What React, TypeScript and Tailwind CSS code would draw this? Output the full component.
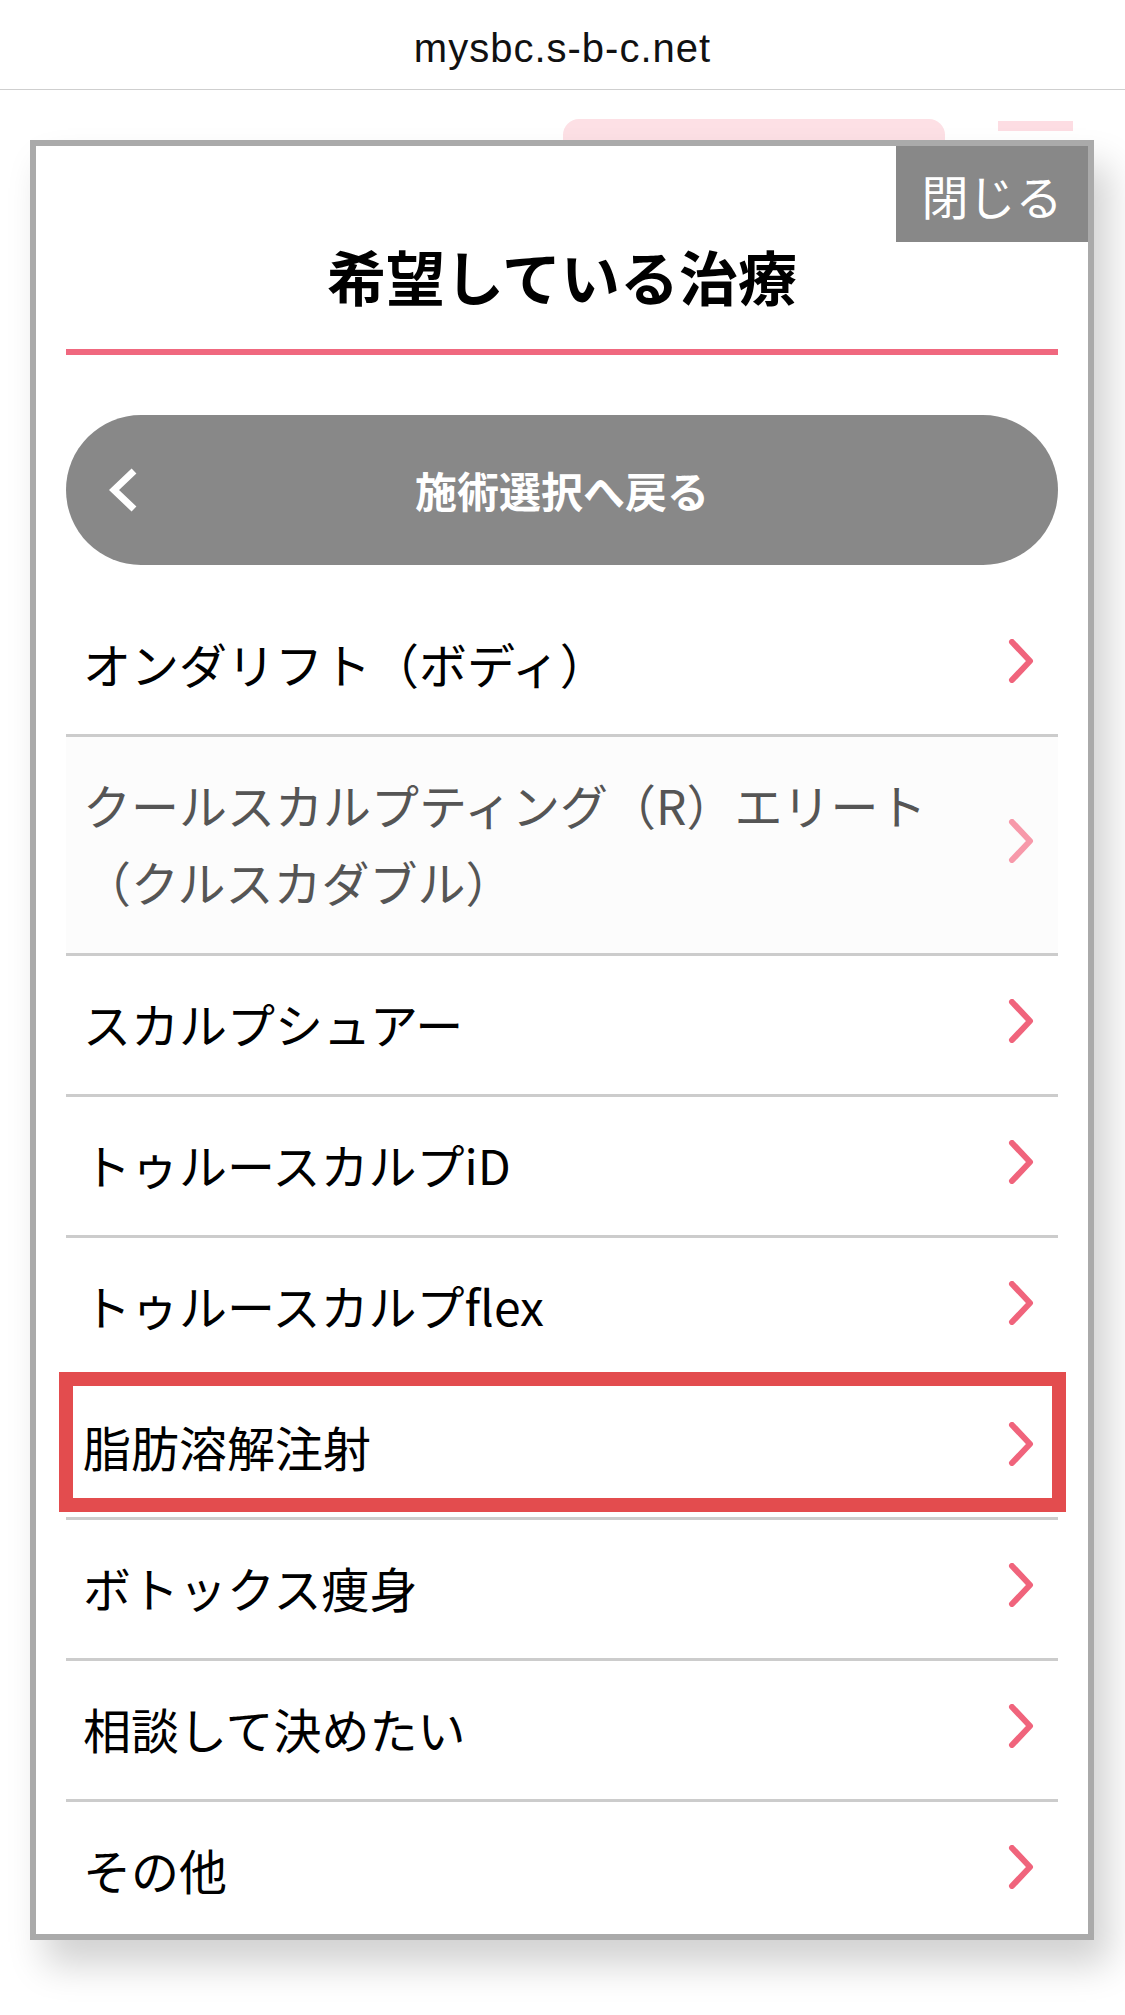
const items = [
  { label: "オンダリフト（ボディ）" },
  { label: "クールスカルプティング（R）エリート", label2: "（クルスカダブル）", muted: true },
  { label: "スカルプシュアー" },
  { label: "トゥルースカルプiD" },
  { label: "トゥルースカルプflex" },
  { label: "脂肪溶解注射", marked: true },
  { label: "ボトックス痩身" },
  { label: "相談して決めたい" },
  { label: "その他" },
];

function Chevron({ color }: { color: string }) {
  return (
    <svg width="26" height="44" viewBox="0 0 26 44" className="shrink-0">
      <polyline
        points="4,3 22,22 4,41"
        fill="none"
        stroke={color}
        strokeWidth="6"
        strokeLinecap="round"
        strokeLinejoin="round"
      />
    </svg>
  );
}

export default function App() {
  return (
    <div className="relative w-[1125px] h-[2015px] overflow-hidden bg-white font-['Noto_Sans_CJK_JP',sans-serif]">
      {/* browser address bar */}
      <header className="h-[90px] flex items-center justify-center border-b border-[#cfcfcf]">
        <span className="font-['Liberation_Sans',sans-serif] text-[40px] tracking-[1px] text-[#111] leading-none mt-[6px]">
          mysbc.s-b-c.net
        </span>
      </header>

      {/* page behind the modal */}
      <div className="flex justify-end items-start gap-[53px] pr-[52px] pt-[29px]">
        <div className="w-[382px] h-[80px] rounded-[16px] bg-[#fde0e5] flex items-center justify-center text-white text-[28px] font-bold">
          お客様番号確認はこちら
        </div>
        <div className="w-[75px] h-[10px] mt-[2px] bg-[#fddde3]" />
      </div>

      {/* modal */}
      <div className="absolute left-[30px] top-[140px] w-[1064px] h-[1800px] border-[6px] border-[#aaaaaa] bg-white overflow-hidden shadow-[15px_25px_35px_rgba(0,0,0,0.18)]">
        <button className="absolute right-0 top-0 w-[192px] h-[96px] bg-[#888888] text-white text-[47px] leading-none flex items-center justify-center">
          閉じる
        </button>

        <div className="px-[30px]">
          <h2 className="pt-[86px] pb-[30px] text-center text-[59px] leading-[87px] font-bold text-black border-b-[6px] border-[#f0687f]">
            希望している治療
          </h2>

          <div className="relative mt-[60px] h-[150px] rounded-full bg-[#888888] flex items-center justify-center">
            <svg width="30" height="46" viewBox="0 0 30 46" className="absolute left-[43px] top-[52px]">
              <polyline
                points="25,4 5,23 25,42"
                fill="none"
                stroke="white"
                strokeWidth="7"
                strokeLinejoin="miter"
              />
            </svg>
            <span className="text-white text-[42px] font-bold leading-none">施術選択へ戻る</span>
          </div>

          <ul className="mt-[31px]">
            {items.map((it, i) => (
              <li
                key={i}
                className={
                  "relative flex items-center justify-between pl-[17px] pr-[24px] pt-[29px] pb-[33px] border-b-[3px] border-[#cccccc] " +
                  (it.muted ? "bg-[#fcfcfc] text-[#555555]" : "text-black")
                }
              >
                <span className={"text-[48px] " + (it.label2 ? "leading-[77px]" : "leading-[76px]")}>
                  {it.label}
                  {it.label2 && (
                    <>
                      <br />
                      {it.label2}
                    </>
                  )}
                </span>
                <span className="-mt-[4px]">
                  <Chevron color={it.muted ? "#f799aa" : "#f0647c"} />
                </span>
                {it.marked && (
                  <div className="absolute -top-[7px] -left-[7px] -right-[8px] bottom-[5px] border-[14px] border-[#e34c4e]" />
                )}
              </li>
            ))}
          </ul>
        </div>
      </div>
    </div>
  );
}
